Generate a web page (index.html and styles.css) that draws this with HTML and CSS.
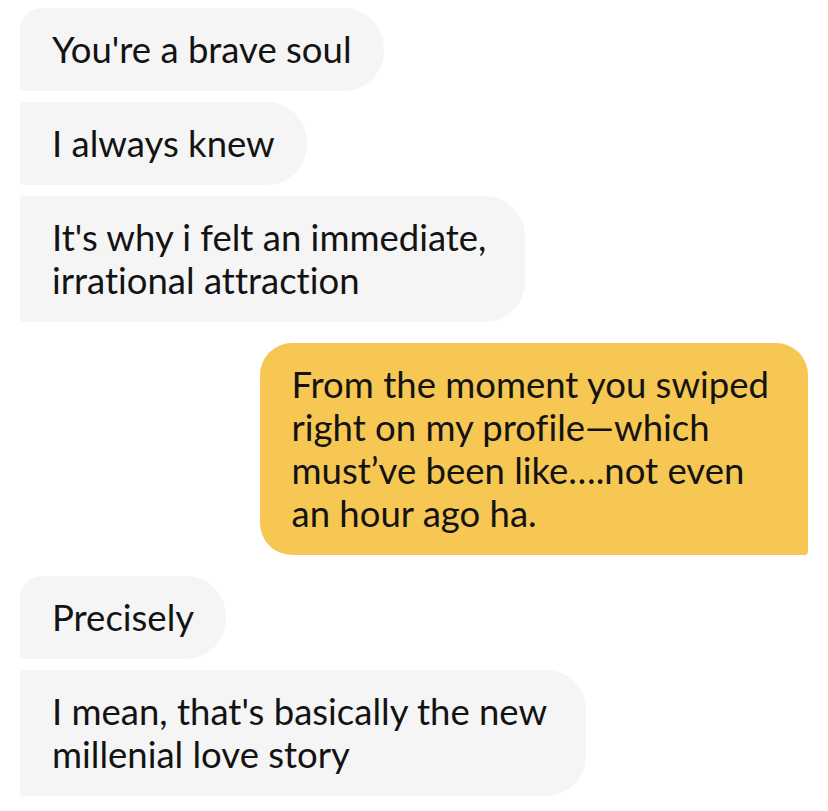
FILE: index.html
```html
<!DOCTYPE html>
<html lang="en">
<head>
<meta charset="utf-8">
<title>Chat</title>
<link rel="stylesheet" href="styles.css">
</head>
<body>
<main class="chat">
  <div class="group group-in">
    <div class="bubble in first">You're a brave soul</div>
    <div class="bubble in">I always knew</div>
    <div class="bubble in multi">It's why i felt an immediate,<br>irrational attraction</div>
  </div>
  <div class="group group-out">
    <div class="bubble out multi">From the moment you swiped<br>right on my profile—which<br>must’ve been like….not even<br>an hour ago ha.</div>
  </div>
  <div class="group group-in">
    <div class="bubble in first">Precisely</div>
    <div class="bubble in multi">I mean, that's basically the new<br>millenial love story</div>
  </div>
</main>
</body>
</html>
```

FILE: styles.css
```css
html, body {
  margin: 0;
  padding: 0;
  background: #ffffff;
}

.chat {
  display: flex;
  flex-direction: column;
  gap: 21px;
  padding: 8px 20px 0 20px;
  font-family: "Lato", "Liberation Sans", sans-serif;
  font-size: 36.5px;
  line-height: 43px;
  font-variant-ligatures: none;
  color: #131313;
}

.group {
  display: flex;
  flex-direction: column;
  gap: 11px;
}

.group-in {
  align-items: flex-start;
}

.group-out {
  align-items: flex-end;
}

.bubble {
  padding: 20px 32px;
  white-space: nowrap;
}

.bubble.multi {
  padding-right: 39px;
}

.in {
  background: #f5f5f5;
  border-radius: 4px 40px 40px 4px;
}

.in.first {
  border-top-left-radius: 22px;
}

.out {
  background: #f6c752;
  border-radius: 32px 32px 4px 32px;
}
```
